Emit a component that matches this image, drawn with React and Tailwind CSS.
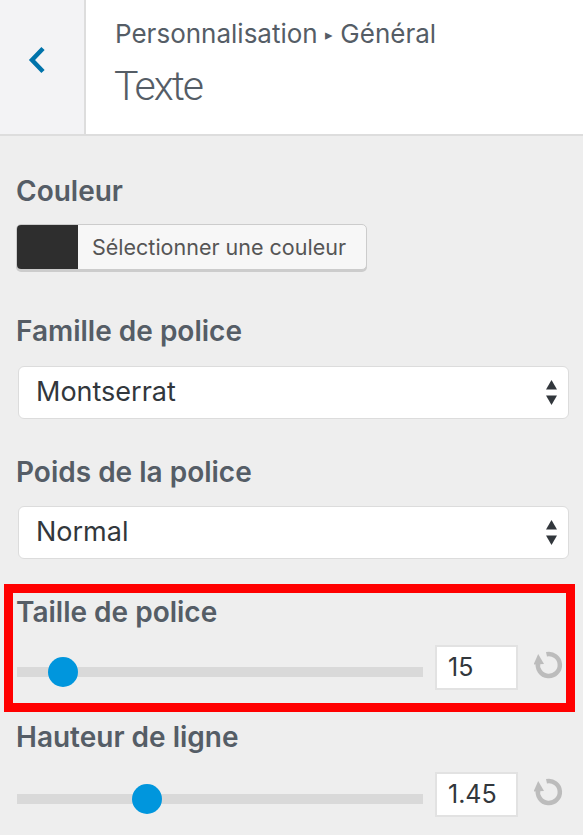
import React from "react";

const font = { fontFamily: "Inter, 'Noto Sans', sans-serif" };

function Label({ children, className = "" }) {
  return (
    <div className={`text-[28px] leading-[34px] font-semibold text-[#555d66] ${className}`}>{children}</div>
  );
}

function SelectBox({ value }) {
  return (
    <div className="ml-[2px] mr-[-2px] h-[53px] bg-white rounded-[6px] border border-[#dcdcdc] flex items-center justify-between pl-[17px] pr-[11px]">
      <span className="text-[27px] text-[#32373c]">{value}</span>
      <svg width="11" height="26" viewBox="0 0 11 26">
        <path d="M5.5 0 L11 9.5 L0 9.5 Z" fill="#32373c" />
        <path d="M0 15.5 L11 15.5 L5.5 25 Z" fill="#32373c" />
      </svg>
    </div>
  );
}

function ResetIcon() {
  return (
    <svg width="30" height="30" viewBox="0 0 30 30">
      <path d="M12.5 4.3 A11 11 0 1 1 4.2 12.3" fill="none" stroke="#bcbcbc" strokeWidth="4.5" />
      <path d="M-0.5 14.5 L4.2 4 L10 14 Z" fill="#bcbcbc" />
    </svg>
  );
}

function SliderRow({ value, pos }) {
  return (
    <div className="flex items-center">
      <div className="relative ml-[1px] mt-[8px] w-[406px] h-[10px] bg-[#d9d9d9]">
        <div
          className="absolute top-1/2 w-[30px] h-[30px] -mt-[15px] -ml-[15px] rounded-full bg-[#0096dd]"
          style={{ left: pos }}
        />
      </div>
      <div className="ml-[12px] w-[83px] h-[45px] bg-white border-2 border-[#e2e2e2] flex items-center pl-[11px] text-[25px] text-[#32373c]">
        {value}
      </div>
      <div className="ml-[16px] mt-[-6px]">
        <ResetIcon />
      </div>
    </div>
  );
}

export default function App() {
  return (
    <div className="w-[583px] h-[835px] overflow-hidden bg-[#eeeeee]" style={font}>
      <div className="flex h-[136px] border-b-2 border-[#dddddd]">
        <div className="w-[86px] bg-[#f3f3f5] border-r-2 border-[#dddddd] flex items-center justify-center">
          <svg width="18" height="28" viewBox="0 0 18 28" className="-mt-[14px] -ml-[10px]">
            <path d="M15 2.5 L4 14 L15 25.5" fill="none" stroke="#0073aa" strokeWidth="4.5" />
          </svg>
        </div>
        <div className="flex-1 bg-white pl-[29px] pt-[18px]">
          <div className="text-[26px] leading-[32px] text-[#555d66]">
            Personnalisation <span className="text-[15px] align-[3px]">▸</span> Général
          </div>
          <div
            className="mt-[13px] ml-[-1px] text-[41px] leading-[44px] font-light text-[#555d66] tracking-[-2px]"
            style={{ fontFamily: "Roboto, sans-serif" }}
          >
            Texte
          </div>
        </div>
      </div>

      <div className="px-[16px]">
        <Label className="mt-[38px]">Couleur</Label>
        <div className="mt-[16px] flex w-[351px] h-[46px] rounded-[5px] border border-[#cccccc] bg-[#f7f7f7] shadow-[0_2px_0_#cccccc] overflow-hidden">
          <div className="w-[61px] bg-[#2e2e2e]" />
          <div className="flex-1 flex items-center pl-[14px] text-[21.5px] text-[#555555]">
            Sélectionner une couleur
          </div>
        </div>

        <Label className="mt-[44px]">Famille de police</Label>
        <div className="mt-[18px]">
          <SelectBox value="Montserrat" />
        </div>

        <Label className="mt-[36px]">Poids de la police</Label>
        <div className="mt-[17px]">
          <SelectBox value="Normal" />
        </div>

        <div className="relative mt-[36px]">
          <div className="absolute left-[-12px] right-[-8px] top-[-11px] bottom-[-22px] border-[9px] border-[#ff0000] pointer-events-none" />
          <Label>Taille de police</Label>
          <div className="mt-[16px]">
            <SliderRow value="15" pos="46px" />
          </div>
        </div>

        <Label className="mt-[30px]">Hauteur de ligne</Label>
        <div className="mt-[18px]">
          <SliderRow value="1.45" pos="130px" />
        </div>
      </div>
    </div>
  );
}
